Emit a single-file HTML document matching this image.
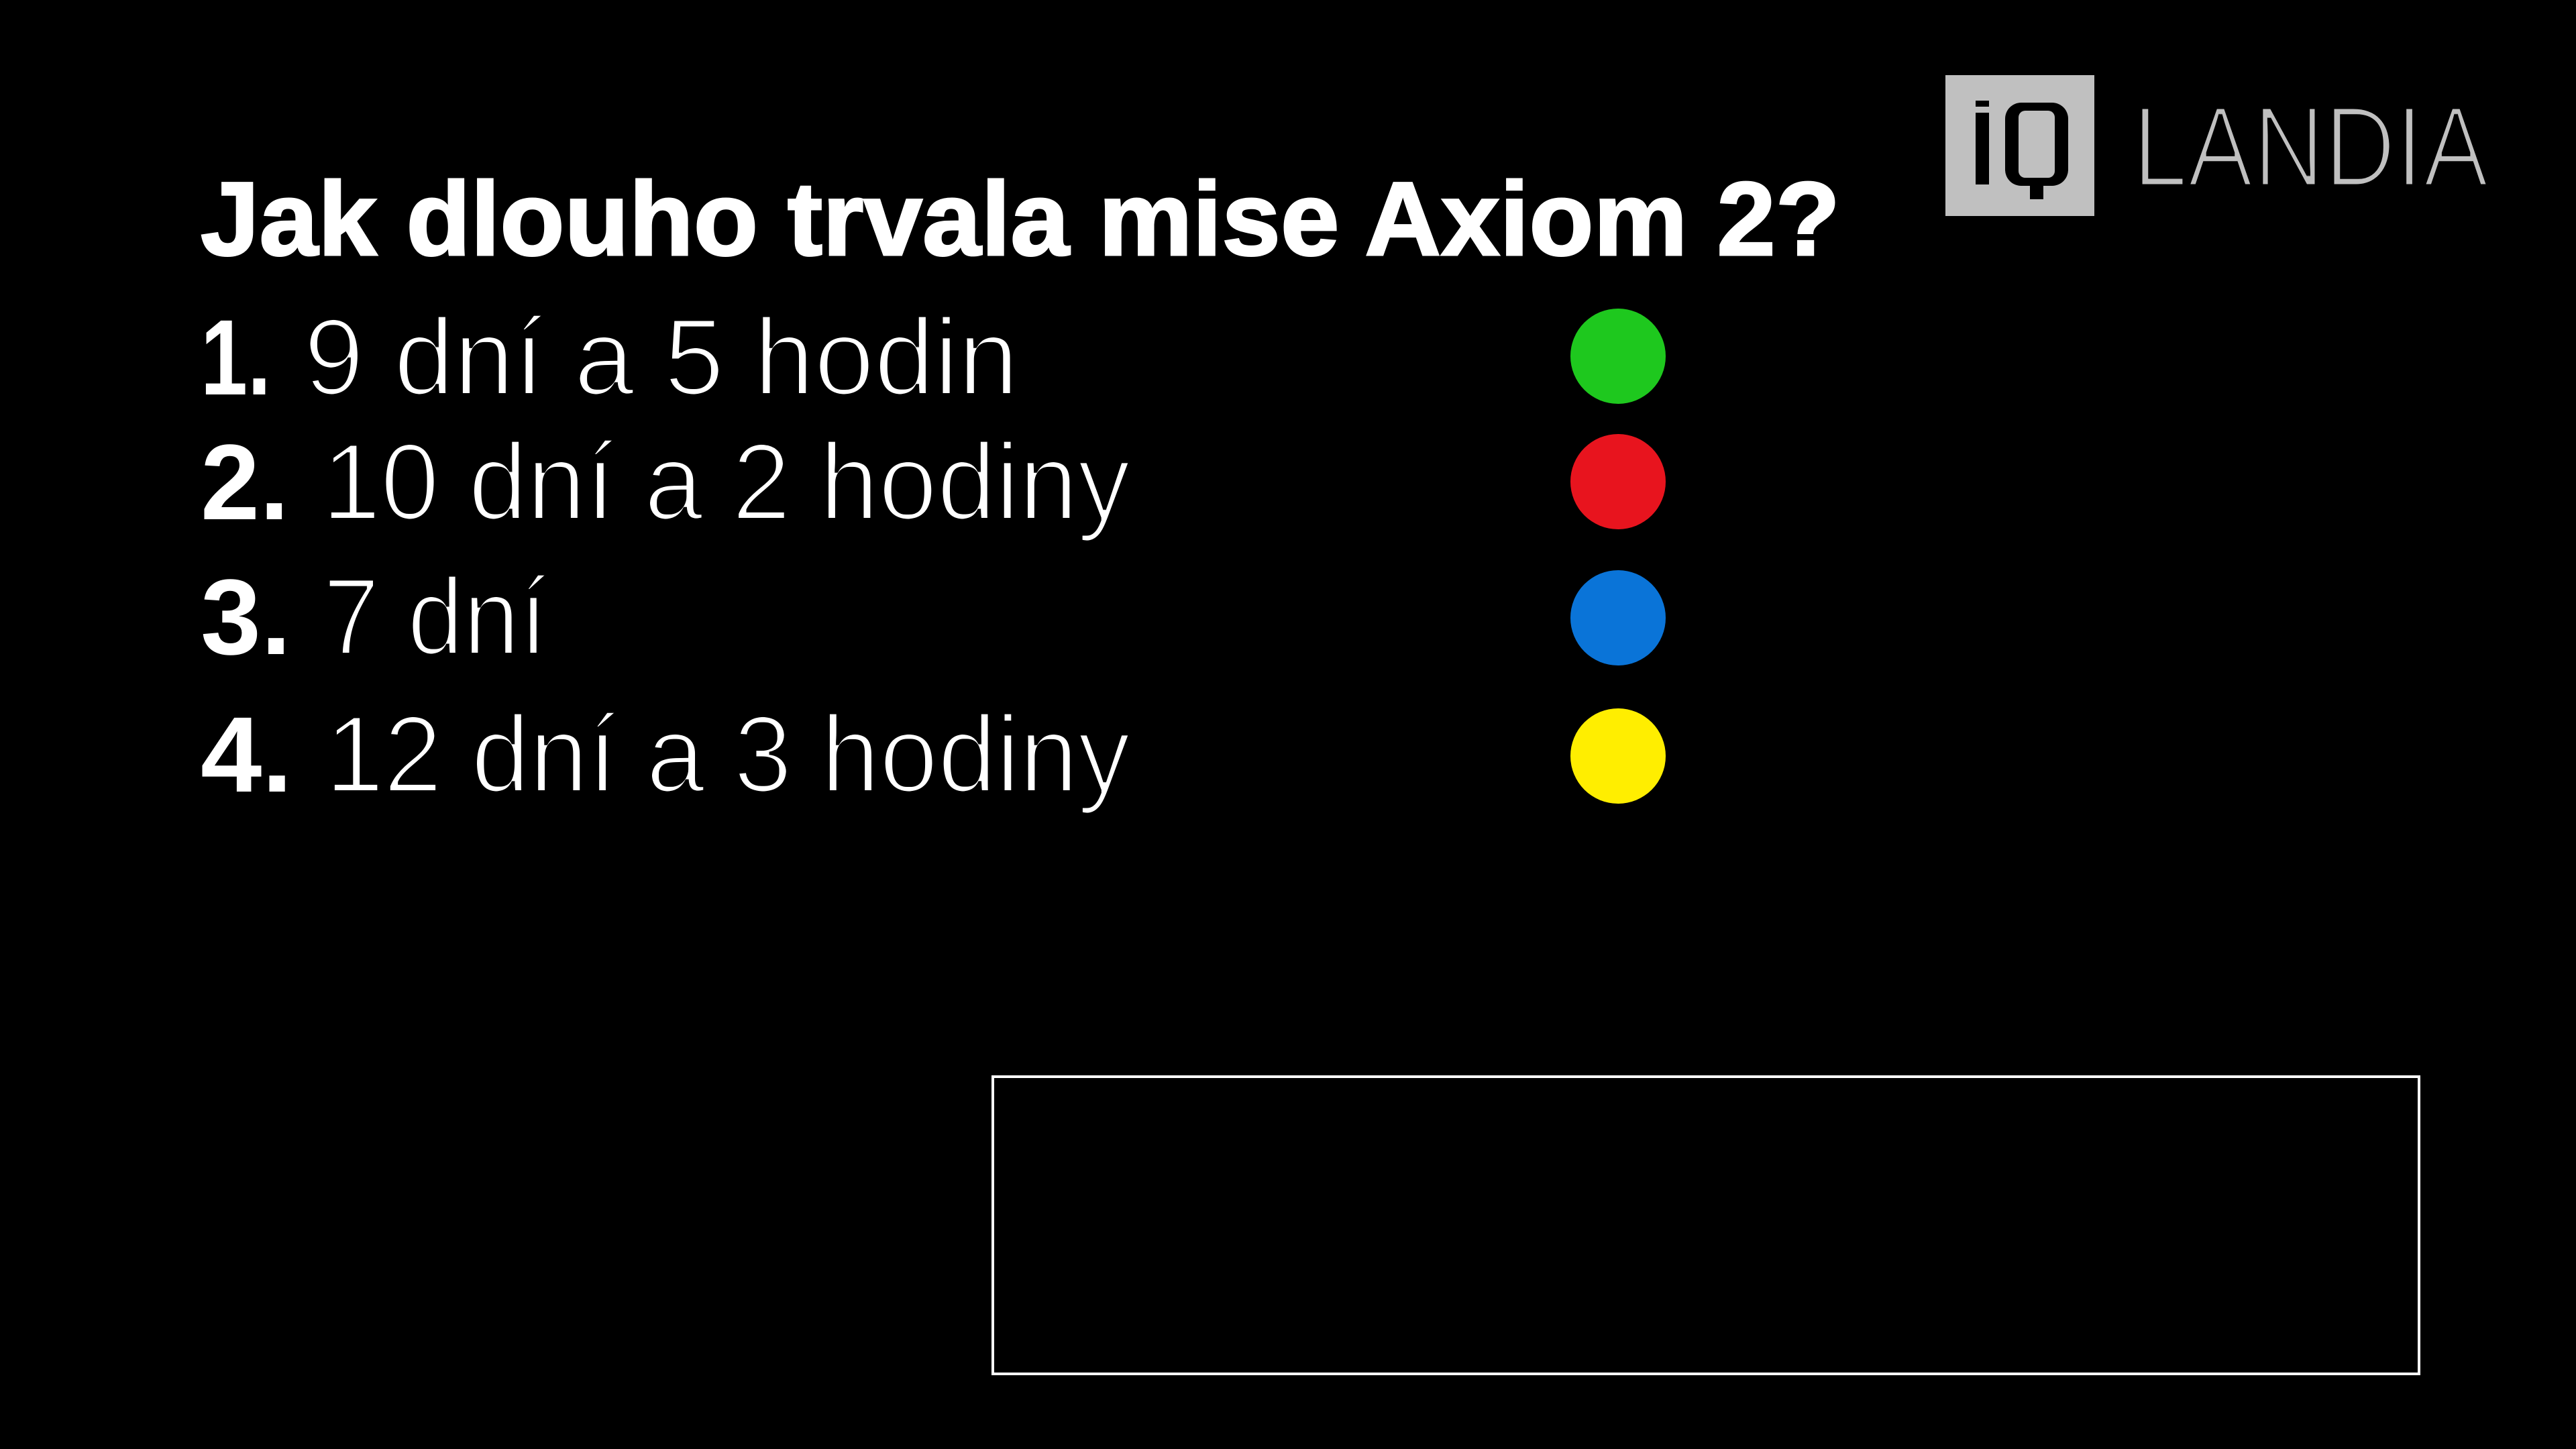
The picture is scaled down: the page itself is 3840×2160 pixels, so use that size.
<!DOCTYPE html>
<html><head><meta charset="utf-8"><style>
html,body{margin:0;padding:0;background:#000;width:3840px;height:2160px;overflow:hidden}
svg{display:block}
</style></head><body>
<svg width="3840" height="2160" viewBox="0 0 3840 2160" xmlns="http://www.w3.org/2000/svg">
<defs>
<filter id="thin" x="-5%" y="-20%" width="110%" height="140%"><feMorphology operator="erode" radius="2"/></filter>
<filter id="thin2" x="-5%" y="-20%" width="110%" height="140%"><feMorphology operator="erode" radius="2.5"/></filter>
</defs>
<rect width="3840" height="2160" fill="#000"/>
<g font-family="Liberation Sans, sans-serif" fill="#fff">
<text x="299" y="380" font-size="156" font-weight="bold" stroke="#fff" stroke-width="3" textLength="2444" lengthAdjust="spacingAndGlyphs">Jak dlouho trvala mise Axiom 2?</text>
<text x="299" y="588" font-size="160" font-weight="bold" textLength="105" lengthAdjust="spacingAndGlyphs">1.</text>
<text x="299" y="774" font-size="160" font-weight="bold" textLength="132" lengthAdjust="spacingAndGlyphs">2.</text>
<text x="299" y="975" font-size="160" font-weight="bold" textLength="135" lengthAdjust="spacingAndGlyphs">3.</text>
<text x="299" y="1180" font-size="160" font-weight="bold" textLength="137" lengthAdjust="spacingAndGlyphs">4.</text>
</g>
<g font-family="Liberation Sans, sans-serif" fill="#fff" filter="url(#thin)">
<text x="453" y="588" font-size="162" textLength="1065" lengthAdjust="spacingAndGlyphs">9 dní a 5 hodin</text>
<text x="480" y="774" font-size="162" textLength="1205" lengthAdjust="spacingAndGlyphs">10 dní a 2 hodiny</text>
<text x="482" y="975" font-size="162" textLength="334" lengthAdjust="spacingAndGlyphs">7 dní</text>
<text x="485" y="1180" font-size="162" textLength="1200" lengthAdjust="spacingAndGlyphs">12 dní a 3 hodiny</text>
</g>
<circle cx="2412" cy="531" r="71" fill="#1ec81e"/>
<circle cx="2412" cy="718" r="71" fill="#e8141e"/>
<circle cx="2412" cy="921" r="71" fill="#0a74d8"/>
<circle cx="2412" cy="1127" r="71" fill="#ffee00"/>
<rect x="1480" y="1605" width="2126" height="443" fill="none" stroke="#fff" stroke-width="4"/>
<rect x="2900" y="112" width="222" height="210" fill="#c0c0c0"/>
<rect x="2945" y="150" width="20" height="9" fill="#000"/>
<rect x="2945" y="168" width="20" height="107" fill="#000"/>
<rect x="2989" y="153" width="94" height="124" rx="24" fill="#000"/>
<rect x="3009" y="165" width="54" height="100" rx="10" fill="#c0c0c0"/>
<rect x="3026" y="272" width="20" height="25" fill="#000"/>
<text x="3179" y="277" font-family="Liberation Sans, sans-serif" font-size="170" fill="#c0c0c0" filter="url(#thin2)" textLength="531" lengthAdjust="spacingAndGlyphs">LANDIA</text>
</svg>
</body></html>
